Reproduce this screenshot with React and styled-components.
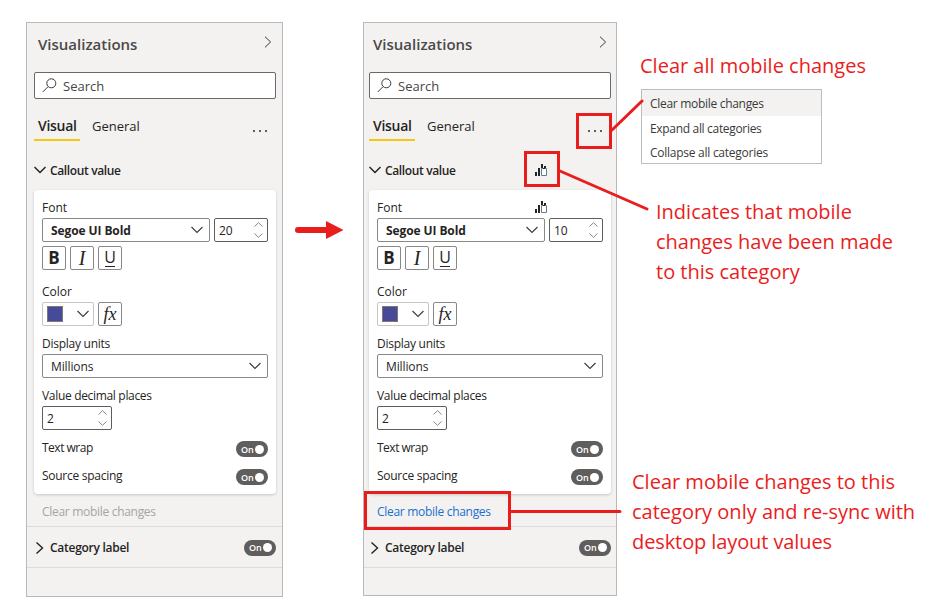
import React from 'react';
import styled, { createGlobalStyle } from 'styled-components';

const RED = '#ea1d1d';

const Global = createGlobalStyle`
  * { box-sizing: border-box; }
  body { margin: 0; background: #fff; font-family: "Open Sans", "Noto Sans", sans-serif; font-size: 12px; color: #252423; }
`;

const Page = styled.main`
  position: relative;
  display: flex;
  align-items: flex-start;
  width: 937px;
  height: 616px;
  padding: 22px 0 0 26px;
  overflow: hidden;
`;

const Pane = styled.section`
  flex: none;
  width: ${p => p.$w}px;
  height: ${p => p.$h}px;
  border: 1px solid #b9b9b9;
  background: #f3f2f1;
`;

/* Keeps the 242px content column at the same width in both panes */
const Inset = styled.div`
  width: 242px;
  margin-left: ${p => p.$left}px;
`;

const Text = styled.span`
  font-size: ${p => p.$size || 12}px;
  font-weight: ${p => p.$weight || 400};
  letter-spacing: ${p => p.$ls || 0}px;
  color: ${p => p.$color || 'inherit'};
  white-space: pre;
`;

const Header = styled.header`
  display: flex;
  align-items: center;
  justify-content: space-between;
  height: 42px;
  padding: 0 4px;
  svg { margin-bottom: 4px; }
`;

const SearchBox = styled.div`
  display: flex;
  align-items: center;
  gap: 6px;
  height: 27px;
  margin-top: 7px;
  padding-left: 7px;
  border: 1px solid #6b6967;
  border-radius: 2px;
  background: #fff;
`;

const Tabs = styled.nav`
  display: flex;
  align-items: flex-start;
  gap: 8px;
  height: 42px;
  margin-top: 13px;
`;

const Tab = styled.div`
  display: flex;
  align-items: center;
  height: 29px;
  padding: 0 4px;
  border-bottom: 2px solid ${p => (p.$active ? '#f2c811' : 'transparent')};
  width: ${p => p.$w}px;
`;

const More = styled.div`
  display: flex;
  gap: 4px;
  margin: 18px 9px 0 auto;
`;

const Dot = styled.i`
  width: 2px;
  height: 2px;
  background: #605e5c;
`;

const CategoryHead = styled.div`
  display: flex;
  align-items: center;
  height: ${p => p.$h}px;
  margin-bottom: ${p => p.$bottom || 0}px;
  gap: 4px;
`;

const Push = styled.span`
  display: flex;
  margin-left: auto;
  margin-right: ${p => p.$r || 0}px;
`;

const Card = styled.div`
  height: 304px;
  padding: 8px 8px 0;
  border-radius: 4px;
  background: #fff;
  box-shadow: 0 1px 3px rgba(0, 0, 0, 0.18);
`;

const Label = styled.div`
  display: flex;
  align-items: center;
  height: 18px;
  margin: ${p => p.$top || 0}px 0 2px;
`;

const Line = styled.div`
  display: flex;
  gap: 4px;
  margin-bottom: 4px;
`;

const Field = styled.div`
  display: flex;
  align-items: center;
  justify-content: space-between;
  width: ${p => p.$w}px;
  height: 24px;
  padding: ${p => p.$pad || '0 6px 0 8px'};
  border: 1px solid ${p => p.$border || '#8a8886'};
  border-radius: 2px;
  background: #fff;
`;

const Button = styled.button`
  display: flex;
  align-items: center;
  justify-content: center;
  width: 24px;
  height: 24px;
  padding: 0;
  border: 1px solid #8a8886;
  border-radius: 2px;
  background: #fff;
  color: #252423;
  line-height: 20px;
  font-family: ${p => (p.$serif ? '"Liberation Serif", serif' : '"Open Sans", sans-serif')};
  font-size: ${p => p.$size}px;
  font-weight: ${p => p.$weight || 400};
  font-style: ${p => (p.$serif ? 'italic' : 'normal')};
`;

const Underlined = styled.span`
  width: 10px;
  height: 18px;
  display: flex;
  justify-content: center;
  line-height: 16px;
  border-bottom: 1px solid #252423;
`;

const Swatch = styled.i`
  width: 16px;
  height: 16px;
  border: 1px solid #7c7a78;
  background: #474a98;
`;

const Toggles = styled.div`
  margin-top: 11px;
`;

const ToggleRow = styled.div`
  display: flex;
  align-items: flex-start;
  justify-content: space-between;
  height: 28px;
  line-height: 13px;
`;

const ToggleShell = styled.span`
  display: flex;
  align-items: center;
  gap: 1px;
  width: 32px;
  height: 16px;
  padding-left: 5px;
  border-radius: 8px;
  background: #605e5c;
  color: #fff;
  font-size: 9px;
  font-weight: 600;
`;

const Knob = styled.i`
  width: 9px;
  height: 9px;
  border-radius: 50%;
  background: #fff;
`;

const ClearRow = styled.div`
  display: flex;
  align-items: center;
  height: 32px;
  padding: 2px 0 0 8px;
`;

const Closed = styled.div`
  height: 42px;
  border-top: 1px solid #dddcdb;
  border-bottom: 1px solid #dddcdb;
`;

const ArrowCell = styled.div`
  flex: none;
  display: flex;
  width: 80px;
  padding: 198px 0 0 12px;
`;

const Notes = styled.aside`
  flex: none;
  display: flex;
  flex-direction: column;
  width: 304px;
  margin-left: 15px;
  padding-top: 29px;
`;

const Note = styled.div`
  display: flex;
  flex-direction: column;
  margin: ${p => p.$top || 0}px 0 0 ${p => p.$left || 0}px;
  line-height: 30px;
  color: ${RED};
`;

const Menu = styled.div`
  width: 181px;
  height: 75px;
  margin: 8px 0 0 9px;
  border: 1px solid #bdbdbd;
  background: #fff;
  color: #3b3a39;
`;

const MenuItem = styled.div`
  display: flex;
  align-items: center;
  height: ${p => p.$h}px;
  padding: ${p => p.$top || 0}px 0 0 8px;
  background: ${p => (p.$hot ? '#f3f2f1' : '#fff')};
`;

const Marks = styled.svg`
  position: absolute;
  left: 0;
  top: 0;
  pointer-events: none;
`;

const Chevron = ({ w, h, d, color = '#3b3a39', sw = 1.1 }) => (
  <svg width={w} height={h} viewBox={`0 0 ${w} ${h}`} fill="none" stroke={color} strokeWidth={sw}>
    <path d={d} />
  </svg>
);
const Down = () => <Chevron w={12} h={8} d="M.5 1 6 6.5 11.5 1" />;

const SpinStack = styled.span`
  display: flex;
  flex-direction: column;
  gap: 6px;
  padding-bottom: 1px;
`;
const Spin = () => (
  <SpinStack>
    <Chevron w={9} h={5} color="#8a8886" sw={1} d="M.5 4.5 4.5.7 8.5 4.5" />
    <Chevron w={9} h={5} color="#8a8886" sw={1} d="M.5.5 4.5 4.3 8.5.5" />
  </SpinStack>
);

const MobileIcon = () => (
  <svg width="12" height="13" viewBox="0 0 12 13">
    <path fill="#252423" d="M0 8h2v4H0zM3 4h2v8H3zM6 0h2v4H6zM9 2h2v2H9z" />
    <path fill="#fff" stroke="#5f7f92" d="M6.5 4.5h5v7h-5z" />
    <path stroke="#252423" d="M8 4.5h2" />
  </svg>
);

const Toggle = () => <ToggleShell>On<Knob /></ToggleShell>;

function Visualizations({ width, height, left, size, changed }) {
  return (
    <Pane $w={width} $h={height}>
      <Inset $left={left}>
        <Header>
          <Text $size={15} $weight={600} $color="#4b4948">Visualizations</Text>
          <Chevron w={8} h={12} sw={1} d="M1 .7 6.6 6 1 11.3" />
        </Header>
        <SearchBox>
          <svg width="15" height="15" viewBox="0 0 15 15" fill="none" stroke="#3b3a39">
            <circle cx="9.3" cy="5.3" r="4.5" />
            <path d="M6 8.7.7 14" />
          </svg>
          <Text $size={13} $color="#484644">Search</Text>
        </SearchBox>
        <Tabs>
          <Tab $active $w={46}><Text $size={14} $weight={600} $ls={-0.3}>Visual</Text></Tab>
          <Tab $w={56}><Text $size={13}>General</Text></Tab>
          <More><Dot /><Dot /><Dot /></More>
        </Tabs>
        <CategoryHead $h={32} $bottom={4}>
          <Chevron w={12} h={8} sw={1.5} color="#252423" d="M.5 1 6 6.5 11.5 1" />
          <Text $weight={600} $ls={-0.36}>Callout value</Text>
          {changed && <Push $r={64}><MobileIcon /></Push>}
        </CategoryHead>
        <Card>
          <Label>
            <Text>Font</Text>
            {changed && <Push $r={56}><MobileIcon /></Push>}
          </Label>
          <Line>
            <Field $w={168}><Text $weight={700} $ls={-0.1}>Segoe UI Bold</Text><Down /></Field>
            <Field $w={54} $border="#605e5c" $pad="0 4px"><Text>{size}</Text><Spin /></Field>
          </Line>
          <Line>
            <Button $size={17} $weight={700}>B</Button>
            <Button $serif $size={20}>I</Button>
            <Button $size={16}><Underlined>U</Underlined></Button>
          </Line>
          <Label $top={12}><Text>Color</Text></Label>
          <Line>
            <Field $w={52} $border="#c8c6c4" $pad="0 4px"><Swatch /><Down /></Field>
            <Button $serif $size={18}>fx</Button>
          </Line>
          <Label $top={8}><Text $ls={-0.26}>Display units</Text></Label>
          <Line><Field $w={226}><Text $ls={-0.12}>Millions</Text><Down /></Field></Line>
          <Label $top={8}><Text $ls={-0.32}>Value decimal places</Text></Label>
          <Line><Field $w={70} $border="#605e5c" $pad="0 4px"><Text>2</Text><Spin /></Field></Line>
          <Toggles>
            <ToggleRow><Text $ls={-0.5}>Text wrap</Text><Toggle /></ToggleRow>
            <ToggleRow><Text $ls={-0.27}>Source spacing</Text><Toggle /></ToggleRow>
          </Toggles>
        </Card>
        <ClearRow>
          <Text $ls={-0.3} $color={changed ? '#1a6fd0' : '#a6a4a2'}>Clear mobile changes</Text>
        </ClearRow>
      </Inset>
      <Closed>
        <Inset $left={left}>
          <CategoryHead $h={41}>
            <Chevron w={12} h={12} sw={1.4} color="#252423" d="M2.5.5 8.5 6 2.5 11.5" />
            <Text $weight={600} $ls={-0.27}>Category label</Text>
            <Push><Toggle /></Push>
          </CategoryHead>
        </Inset>
      </Closed>
    </Pane>
  );
}

export default function App() {
  return (
    <>
      <Global />
      <Page>
        <Visualizations width={257} height={575} left={7} size="20" />
        <ArrowCell>
          <svg width="50" height="20" viewBox="0 0 50 20">
            <path d="M3 10H34" stroke={RED} strokeWidth="6" strokeLinecap="round" />
            <path d="M31 1 48.5 10 31 19z" fill={RED} />
          </svg>
        </ArrowCell>
        <Visualizations width={254} height={574} left={5} size="10" changed />
        <Notes>
          <Note $left={8}><Text $size={20}>Clear all mobile changes</Text></Note>
          <Menu>
            <MenuItem $hot $h={26}><Text $ls={-0.3}>Clear mobile changes</Text></MenuItem>
            <MenuItem $h={24} $top={1}><Text $ls={-0.32}>Expand all categories</Text></MenuItem>
            <MenuItem $h={23} $top={2}><Text $ls={-0.26}>Collapse all categories</Text></MenuItem>
          </Menu>
          <Note $top={33} $left={24}>
            <Text $size={20}>Indicates that mobile</Text>
            <Text $size={20}>changes have been made</Text>
            <Text $size={20}>to this category</Text>
          </Note>
          <Note $top={180}>
            <Text $size={20}>Clear mobile changes to this</Text>
            <Text $size={20}>category only and re-sync with</Text>
            <Text $size={20} $ls={-0.1}>desktop layout values</Text>
          </Note>
        </Notes>
        <Marks width="937" height="616" fill="none" stroke={RED} strokeWidth="3" strokeLinecap="round">
          <path d="M577.5 114.5h33v33h-33zM525.5 152.5h33v33h-33zM365.5 492.5h144v36h-144z" strokeLinecap="butt" />
          <path d="M612 130 642 101M560 171 647 209M511 511.5H620" />
        </Marks>
      </Page>
    </>
  );
}
